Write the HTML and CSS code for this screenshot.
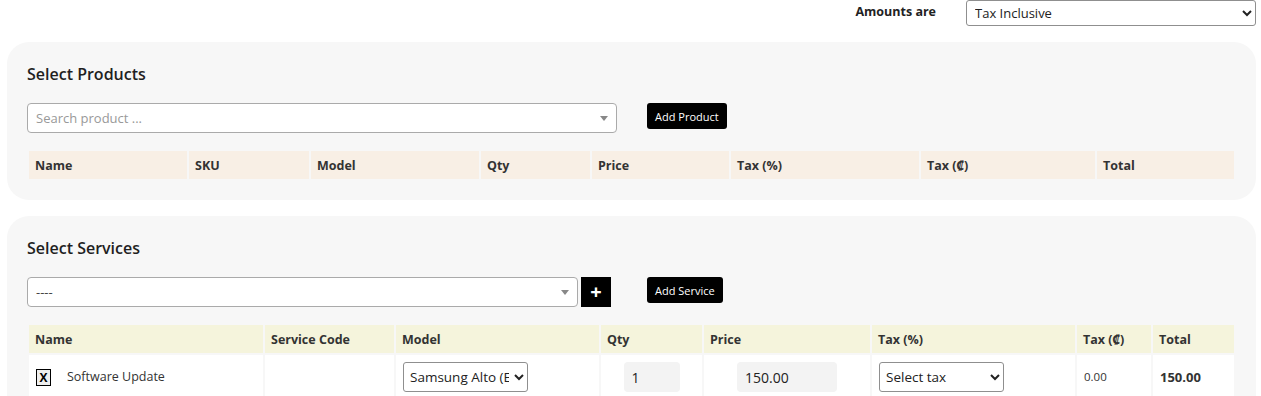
FILE: index.html
```html
<!DOCTYPE html>
<html>
<head>
<meta charset="UTF-8">
<title>Order items</title>
<link rel="stylesheet" href="styles.css">
</head>
<body>
  <div class="amounts">
    <label class="amounts-label">Amounts are</label>
    <select class="amounts-select">
      <option>Tax Inclusive</option>
      <option>Tax Exclusive</option>
    </select>
  </div>

  <section class="panel">
    <h3 class="panel-title">Select Products</h3>
    <div class="picker">
      <div class="combo combo-product">
        <span class="combo-placeholder">Search product ...</span>
        <span class="combo-arrow"></span>
      </div>
      <button class="btn-add">Add Product</button>
    </div>
    <table class="items items-products">
      <thead>
        <tr>
          <th style="width:158px">Name</th>
          <th style="width:120px">SKU</th>
          <th style="width:168px">Model</th>
          <th style="width:109px">Qty</th>
          <th style="width:137px">Price</th>
          <th style="width:188px">Tax (%)</th>
          <th style="width:174px">Tax (₡)</th>
          <th>Total</th>
        </tr>
      </thead>
    </table>
  </section>

  <section class="panel">
    <h3 class="panel-title">Select Services</h3>
    <div class="picker">
      <div class="combo combo-service">
        <span class="combo-value">----</span>
        <span class="combo-arrow"></span>
      </div>
      <button class="btn-plus">+</button>
      <button class="btn-add btn-service">Add Service</button>
    </div>
    <table class="items items-services">
      <thead>
        <tr>
          <th style="width:234px">Name</th>
          <th style="width:129px">Service Code</th>
          <th style="width:203px">Model</th>
          <th style="width:101px">Qty</th>
          <th style="width:166px">Price</th>
          <th style="width:203px">Tax (%)</th>
          <th style="width:74px">Tax (₡)</th>
          <th>Total</th>
        </tr>
      </thead>
      <tbody>
        <tr>
          <td><span class="remove">X</span><span class="service-name">Software Update</span></td>
          <td></td>
          <td>
            <select class="cell-select">
              <option>Samsung Alto (EA)</option>
            </select>
          </td>
          <td class="center"><input class="field field-qty" value="1"></td>
          <td class="center"><input class="field field-price" value="150.00"></td>
          <td>
            <select class="cell-select">
              <option>Select tax</option>
            </select>
          </td>
          <td class="tax-amount">0.00</td>
          <td class="total">150.00</td>
        </tr>
      </tbody>
    </table>
  </section>
</body>
</html>
```

FILE: styles.css
```css
* {
  box-sizing: border-box;
}

body {
  margin: 0;
  padding: 0 5px 0 7px;
  font-family: "Open Sans", "Noto Sans", sans-serif;
  color: #222;
  background: #fff;
}

/* barra superior */
.amounts {
  display: flex;
  justify-content: flex-end;
  align-items: center;
  gap: 30px;
  height: 26px;
}

.amounts-label {
  font-size: 12.5px;
  font-weight: 700;
  margin-top: -4px;
}

.amounts-select {
  width: 290px;
  height: 26px;
  font-family: inherit;
  font-size: 13px;
  color: #222;
  padding: 0 4px;
  border: 1px solid #8f8f8f;
  border-radius: 3px;
  background: #fff;
}

/* tarjetas */
.panel {
  background: #f7f7f7;
  border-radius: 22px;
  margin-top: 16px;
  padding: 20px 20px 19px 20px;
}

.panel-title {
  margin: 0 0 17px 0;
  height: 24px;
  font-size: 16px;
  font-weight: 600;
  line-height: 24px;
  color: #1f1f1f;
}

.picker {
  display: flex;
  align-items: flex-start;
  height: 30px;
  margin-bottom: 16px;
}

.combo {
  position: relative;
  height: 30px;
  background: #fff;
  border: 1px solid #aaa;
  border-radius: 4px;
  padding: 0 8px;
  font-size: 13px;
  line-height: 28px;
}

.combo-product {
  width: 590px;
}

.combo-service {
  width: 551px;
}

.combo-placeholder {
  color: #999;
}

.combo-value {
  color: #444;
}

.combo-arrow {
  position: absolute;
  right: 8px;
  top: 12px;
  border-left: 4px solid transparent;
  border-right: 4px solid transparent;
  border-top: 5px solid #888;
}

.btn-add {
  margin-left: 30px;
  height: 26px;
  padding: 0 8px;
  background: #000;
  color: #fff;
  border: none;
  border-radius: 3px;
  font-family: inherit;
  font-size: 11px;
}

.btn-service {
  margin-left: 36px;
}

.btn-plus {
  margin-left: 3px;
  width: 30px;
  height: 30px;
  padding: 0;
  background: #000;
  color: #fff;
  border: none;
  font-family: inherit;
  font-size: 20px;
  font-weight: 700;
  line-height: 28px;
}

/* tablas */
.items {
  width: 100%;
  border-collapse: separate;
  border-spacing: 2px;
  table-layout: fixed;
  font-size: 12.5px;
  color: #333;
}

.items th {
  text-align: left;
  font-weight: 700;
  height: 28px;
  padding: 0 6px;
}

.items-products th {
  background: #f8efe5;
}

.items-services th {
  background: #f5f4dc;
}

.items td {
  background: #fff;
  height: 44px;
  padding: 0 7px;
  line-height: 16px;
  vertical-align: middle;
}

.remove {
  display: inline-block;
  width: 15px;
  height: 17px;
  border: 1px solid #000;
  background: #eee;
  color: #000;
  font-weight: 700;
  font-size: 12px;
  line-height: 15px;
  text-align: center;
  vertical-align: middle;
}

.service-name {
  margin-left: 16px;
  font-size: 12.5px;
  vertical-align: middle;
}

.cell-select {
  display: block;
  height: 30px;
  width: 125px;
  font-family: inherit;
  font-size: 13.5px;
  color: #222;
  border: 1px solid #8f8f8f;
  border-radius: 3px;
  background: #fff;
  padding: 0 2px;
}

.center {
  text-align: center;
}

.field {
  height: 30px;
  border: none;
  border-radius: 4px;
  background: #f3f3f3;
  font-family: inherit;
  font-size: 14px;
  color: #222;
  padding: 0 8px;
  vertical-align: middle;
}

.field-qty {
  width: 56px;
}

.field-price {
  width: 100px;
}

.tax-amount {
  font-size: 11.5px;
}

.total {
  font-weight: 700;
  font-size: 13px;
}
```
